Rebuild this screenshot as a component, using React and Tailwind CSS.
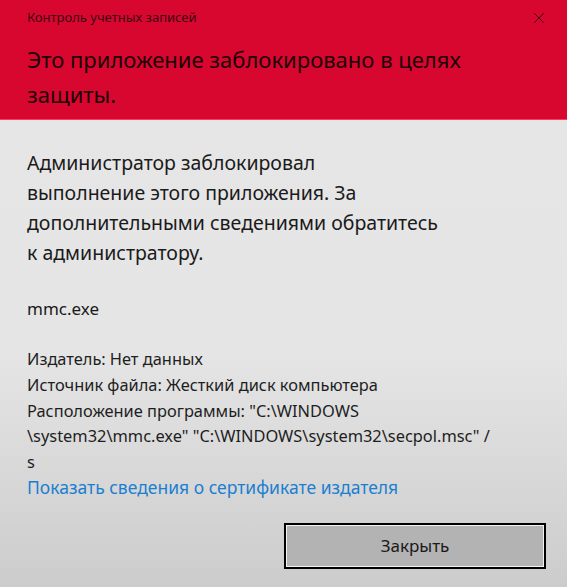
import { X } from "lucide-react";

const font = { fontFamily: '"Noto Sans", "Open Sans", sans-serif' };

const App = () => {
  return (
    <div className="w-[567px] h-[587px] flex flex-col overflow-hidden" style={font}>
      {/* red header */}
      <div className="bg-[#d80730] h-[120px] border-b border-[#ff3b5c] px-[27px] pt-[8px] shrink-0">
        <div className="flex items-center justify-between h-[20px]">
          <p className="text-[13px] text-[#3b0610]">Контроль учетных записей</p>
          <X className="w-[18px] h-[18px] text-[#3b0610] mr-[-8px]" strokeWidth={1.3} />
        </div>
        <h1 className="mt-[14px] text-[22px] leading-[35px] text-[#1c0006]">
          Это приложение заблокировано в целях
          <br />
          защиты.
        </h1>
      </div>

      {/* body */}
      <div className="flex-1 bg-gradient-to-b from-[#e6e6e6] via-[#e5e5e5] to-[#cccccc] px-[27px] pt-[28px] text-[#1a1a1a]">
        <p className="text-[19.5px] leading-[30px]">
          Администратор заблокировал
          <br />
          выполнение этого приложения. За
          <br />
          дополнительными сведениями обратитесь
          <br />к администратору.
        </p>
        <p className="mt-[28px] text-[17px] leading-[26px]">mmc.exe</p>

        <div className="mt-[24px] text-[16.4px] leading-[25.8px] text-[#1e1e1e]">
          <p>Издатель: Нет данных</p>
          <p>Источник файла: Жесткий диск компьютера</p>
          <p>
            Расположение программы: "C:\WINDOWS
            <br />
            \system32\mmc.exe" "C:\WINDOWS\system32\secpol.msc" /
            <br />s
          </p>
          <p className="text-[17.5px] text-[#1a7fd0]">Показать сведения о сертификате издателя</p>
        </div>

        <div className="flex justify-end mt-[22px] mr-[-6px]">
          <button className="w-[262px] h-[46px] border-2 border-black bg-[#b3b3b3] p-0">
            <div className="w-full h-full border border-[#f2f2f2] flex items-center justify-center text-[17px] text-[#1a1a1a]">
              Закрыть
            </div>
          </button>
        </div>
      </div>
    </div>
  );
};

export default App;
